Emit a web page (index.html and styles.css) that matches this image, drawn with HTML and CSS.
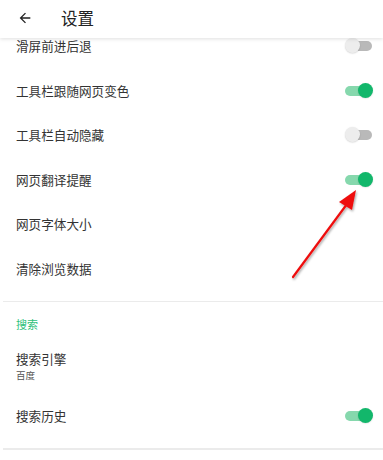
FILE: index.html
```html
<!DOCTYPE html>
<html lang="zh">
<head>
<meta charset="utf-8">
<link rel="stylesheet" href="styles.css">
</head>
<body>
<div class="page">
  <div class="list">
    <div class="row"><span class="label">滑屏前进后退</span><span class="switch off"><span class="track"></span><span class="thumb"></span></span></div>
    <div class="row"><span class="label">工具栏跟随网页变色</span><span class="switch on"><span class="track"></span><span class="thumb"></span></span></div>
    <div class="row"><span class="label">工具栏自动隐藏</span><span class="switch off"><span class="track"></span><span class="thumb"></span></span></div>
    <div class="row"><span class="label">网页翻译提醒</span><span class="switch on"><span class="track"></span><span class="thumb"></span></span></div>
    <div class="row"><span class="label">网页字体大小</span></div>
    <div class="row"><span class="label">清除浏览数据</span></div>
  </div>
  <div class="divider"></div>
  <div class="section-title">搜索</div>
  <div class="two-line">
    <div class="label">搜索引擎</div>
    <div class="sub">百度</div>
  </div>
  <div class="row"><span class="label">搜索历史</span><span class="switch on"><span class="track"></span><span class="thumb"></span></span></div>
  <div class="divider"></div>

  <div class="header">
    <svg class="back" width="16" height="16" viewBox="0 0 24 24"><path d="M20 11H7.83l5.59-5.59L12 4l-8 8 8 8 1.41-1.41L7.83 13H20v-2z" fill="#222"/></svg>
    <span class="title">设置</span>
  </div>

  <svg class="pointer" width="383" height="460" viewBox="0 0 383 460">
    <defs>
      <filter id="sh" x="-20%" y="-20%" width="140%" height="140%">
        <feDropShadow dx="1" dy="1.5" stdDeviation="1" flood-color="#000" flood-opacity="0.35"/>
      </filter>
    </defs>
    <g filter="url(#sh)">
      <line x1="293" y1="277" x2="347" y2="204" stroke="#ee1111" stroke-width="2.2" stroke-linecap="round"/>
      <polygon points="356,190 339,202 352,210" fill="#ee1111"/>
    </g>
  </svg>
</div>
</body>
</html>
```
FILE: styles.css
```css
* { box-sizing: border-box; }
html, body { margin: 0; padding: 0; background: #fff; }
body {
  font-family: "Noto Sans CJK SC", "Noto Sans", sans-serif;
  color: #333;
  width: 383px;
  height: 460px;
  overflow: hidden;
}
.page { position: relative; width: 383px; height: 460px; overflow: hidden; }
.header {
  position: absolute;
  top: 0; left: 0; right: 0;
  height: 38px;
  background: #fff;
  display: flex;
  align-items: center;
  box-shadow: 0 1px 4px rgba(0,0,0,0.13);
}
.back { margin-left: 17px; margin-top: -2px; }
.title {
  margin-left: 28px;
  font-size: 16.5px;
  color: #222;
  line-height: 20px;
  margin-top: -2px;
}
.list { padding-top: 23.7px; }
.row {
  height: 44.6px;
  display: flex;
  align-items: center;
  justify-content: space-between;
  padding: 0 11px 0 16px;
}
.label { font-size: 12.6px; line-height: 18px; color: #333; }
.switch { position: relative; width: 27px; height: 16px; }
.track {
  position: absolute;
  left: 0; right: 0; top: 3px;
  height: 10px;
  border-radius: 5px;
}
.thumb {
  position: absolute;
  top: 0;
  width: 15px; height: 15px;
  border-radius: 50%;
}
.switch.off .track { background: #b9b9b9; left: 2px; }
.switch.off .thumb { left: 0; background: #ededed; box-shadow: 0 0.5px 1.5px rgba(0,0,0,0.18); }
.switch.on .track { background: #86d8ad; }
.switch.on .thumb { right: -1px; background: #12b76b; box-shadow: 0 0.5px 1.5px rgba(0,0,0,0.15); }
.divider {
  margin: 9.7px 0 0 3px;
  height: 1.5px;
  background: #ebebeb;
}
.section-title {
  margin-top: 15px;
  padding-left: 16px;
  font-size: 11px;
  line-height: 15px;
  color: #2dbf7a;
}
.two-line { padding: 18px 16px 0 16px; }
.two-line .label { font-size: 12.6px; line-height: 18px; }
.two-line .sub { font-size: 9.5px; line-height: 14px; color: #555; }
.two-line + .row { margin-top: 11.7px; }
.pointer { position: absolute; left: 0; top: 0; pointer-events: none; }
```
